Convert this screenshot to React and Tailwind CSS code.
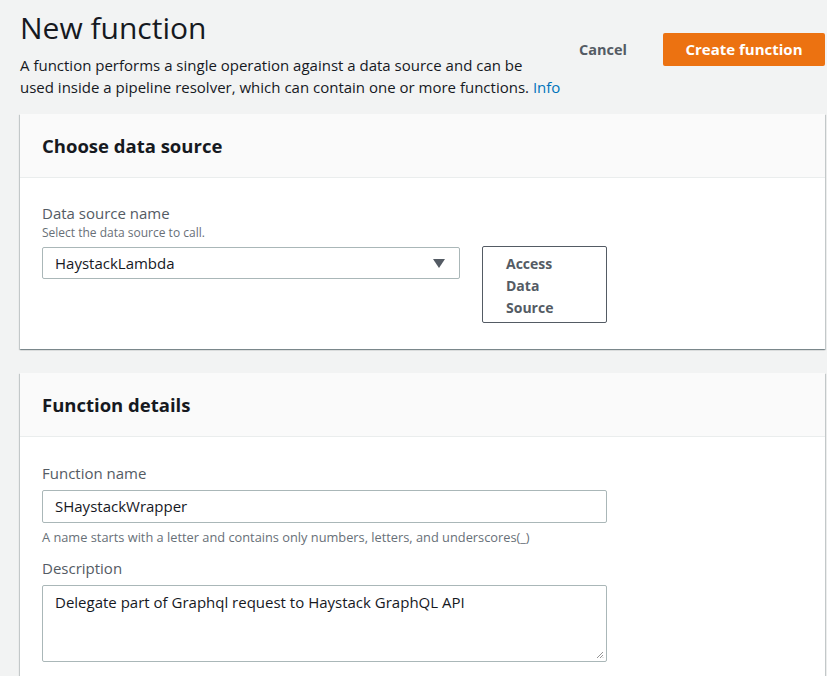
export default function App() {
  const font = { fontFamily: '"Open Sans", "Noto Sans", sans-serif' };
  return (
    <div className="min-h-[676px] w-[827px] overflow-hidden bg-[#f2f3f3] text-[#16191f]" style={font}>
      <div className="pl-[20px] pt-[8px]">
        <div className="flex w-[805px] items-start justify-between">
          <div>
            <h1 className="text-[30px] leading-[40px] font-normal text-[#16191f]">New function</h1>
            <p className="mt-[6px] whitespace-nowrap text-[15px] leading-[22px] text-[#16191f]">
              A function performs a single operation against a data source and can be
              <br />
              used inside a pipeline resolver, which can contain one or more functions.{' '}
              <span className="text-[#0073bb]">Info</span>
            </p>
          </div>
          <div className="mt-[25px] flex items-center">
            <button className="mr-[36px] text-[14.5px] font-bold text-[#545b64]">Cancel</button>
            <button className="h-[33px] w-[162px] rounded-[2px] bg-[#ec7211] text-[15px] font-bold text-white">Create function</button>
          </div>
        </div>

        <div className="mt-[16px] w-[805px] bg-white shadow-[0_1px_1px_0_rgba(0,28,36,0.3),1px_1px_1px_0_rgba(0,28,36,0.15),-1px_1px_1px_0_rgba(0,28,36,0.15)]">
          <div className="flex h-[64px] items-center border-b border-[#eaeded] bg-[#fafafa] px-[22px]">
            <h2 className="text-[18.5px] font-bold leading-[24px]">Choose data source</h2>
          </div>
          <div className="px-[22px] pt-[24px] pb-[26px]">
            <div className="text-[15px] leading-[22px] text-[#545b64]">Data source name</div>
            <div className="mt-[1px] text-[12px] leading-[16px] text-[#687078]">Select the data source to call.</div>
            <div className="mt-[6px] flex items-start">
              <div className="flex h-[32px] w-[418px] items-center justify-between rounded-[2px] border border-[#aab7b8] pl-[12px] pr-[14px]">
                <span className="text-[15px]">HaystackLambda</span>
                <svg width="12" height="9" viewBox="0 0 12 9"><path d="M0 0h12L6 9z" fill="#545b64" /></svg>
              </div>
              <button className="ml-[22px] mt-[-1px] h-[77px] w-[125px] rounded-[2px] border border-[#545b64] pl-[23px] pt-[3px] text-left text-[14px] font-bold leading-[22px] text-[#545b64]">
                <span className="block w-[60px]">Access Data Source</span>
              </button>
            </div>
          </div>
        </div>

        <div className="mt-[24px] w-[805px] bg-white shadow-[0_1px_1px_0_rgba(0,28,36,0.3),1px_1px_1px_0_rgba(0,28,36,0.15),-1px_1px_1px_0_rgba(0,28,36,0.15)]">
          <div className="flex h-[64px] items-center border-b border-[#eaeded] bg-[#fafafa] px-[22px]">
            <h2 className="text-[18.5px] font-bold leading-[24px]">Function details</h2>
          </div>
          <div className="px-[22px] pt-[25px] pb-[20px]">
            <div className="text-[15px] leading-[22px] text-[#545b64]">Function name</div>
            <div className="mt-[6px] flex h-[33px] w-[565px] items-center rounded-[2px] border border-[#aab7b8] pl-[12px] text-[15px]">SHaystackWrapper</div>
            <div className="mt-[6px] text-[12.8px] leading-[16px] text-[#687078]">A name starts with a letter and contains only numbers, letters, and underscores(_)</div>
            <div className="mt-[12px] text-[15px] leading-[22px] text-[#545b64]">Description</div>
            <div className="relative mt-[6px] h-[77px] w-[565px] rounded-[2px] border border-[#aab7b8] pl-[12px] pt-[6px] text-[15px] leading-[20px]">
              Delegate part of Graphql request to Haystack GraphQL API
              <svg className="absolute right-[2px] bottom-[2px]" width="8" height="8" viewBox="0 0 8 8"><path d="M7 1L1 7M7 4L4 7M7 6.5L6.5 7" stroke="#7a7a7a" strokeWidth="0.8" /></svg>
            </div>
          </div>
        </div>
      </div>
    </div>
  );
}
